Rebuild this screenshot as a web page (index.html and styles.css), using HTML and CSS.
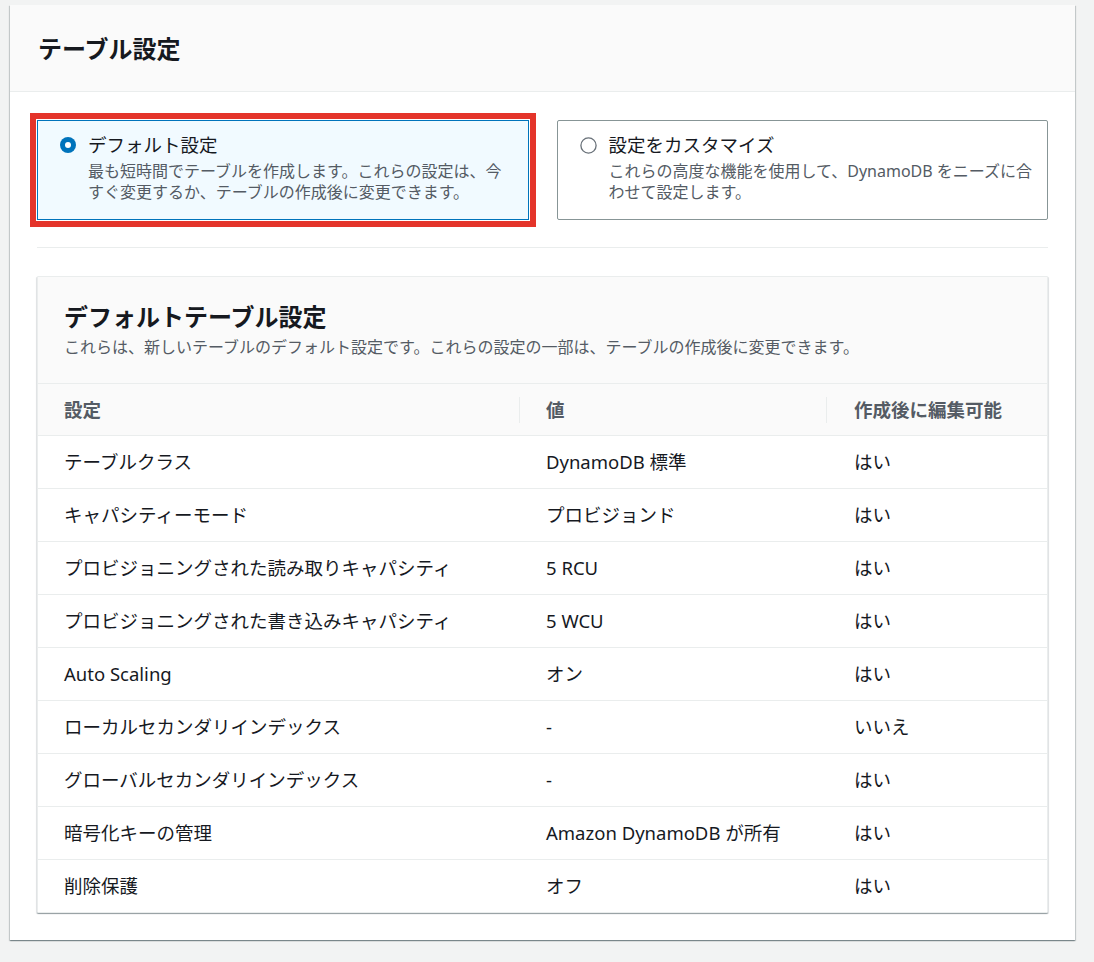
FILE: index.html
```html
<!DOCTYPE html>
<html lang="ja">
<head>
<meta charset="utf-8">
<title>テーブル設定</title>
<link rel="stylesheet" href="styles.css">
</head>
<body>
<div class="page">
  <section class="container">
    <header class="container-header">
      <h2 class="container-title">テーブル設定</h2>
    </header>
    <div class="container-body">
      <div class="tiles">
        <label class="tile tile-selected">
          <span class="radio">
            <svg width="16" height="16" viewBox="0 0 16 16"><circle cx="8" cy="8" r="8" fill="#0073bb"/><circle cx="8" cy="8" r="3" fill="#ffffff"/></svg>
          </span>
          <span class="tile-text">
            <span class="tile-label">デフォルト設定</span>
            <span class="tile-desc">最も短時間でテーブルを作成します。これらの設定は、今<br>すぐ変更するか、テーブルの作成後に変更できます。</span>
          </span>
        </label>
        <label class="tile">
          <span class="radio">
            <svg width="17" height="17" viewBox="0 0 17 17"><circle cx="8.5" cy="8.5" r="7.6" fill="#ffffff" stroke="#687078" stroke-width="1.3"/></svg>
          </span>
          <span class="tile-text">
            <span class="tile-label">設定をカスタマイズ</span>
            <span class="tile-desc">これらの高度な機能を使用して、DynamoDB をニーズに合<br>わせて設定します。</span>
          </span>
        </label>
      </div>
      <hr class="divider">
      <section class="card">
        <header class="card-header">
          <h3 class="card-title">デフォルトテーブル設定</h3>
          <p class="card-desc">これらは、新しいテーブルのデフォルト設定です。これらの設定の一部は、テーブルの作成後に変更できます。</p>
        </header>
        <table class="settings">
          <thead>
            <tr><th class="c1">設定</th><th class="c2">値</th><th class="c3">作成後に編集可能</th></tr>
          </thead>
          <tbody>
            <tr><td class="c1">テーブルクラス</td><td class="c2">DynamoDB 標準</td><td class="c3">はい</td></tr>
            <tr><td class="c1">キャパシティーモード</td><td class="c2">プロビジョンド</td><td class="c3">はい</td></tr>
            <tr><td class="c1">プロビジョニングされた読み取りキャパシティ</td><td class="c2">5 RCU</td><td class="c3">はい</td></tr>
            <tr><td class="c1">プロビジョニングされた書き込みキャパシティ</td><td class="c2">5 WCU</td><td class="c3">はい</td></tr>
            <tr><td class="c1">Auto Scaling</td><td class="c2">オン</td><td class="c3">はい</td></tr>
            <tr><td class="c1">ローカルセカンダリインデックス</td><td class="c2">-</td><td class="c3">いいえ</td></tr>
            <tr><td class="c1">グローバルセカンダリインデックス</td><td class="c2">-</td><td class="c3">はい</td></tr>
            <tr><td class="c1">暗号化キーの管理</td><td class="c2">Amazon DynamoDB が所有</td><td class="c3">はい</td></tr>
            <tr><td class="c1">削除保護</td><td class="c2">オフ</td><td class="c3">はい</td></tr>
          </tbody>
        </table>
      </section>
    </div>
  </section>
</div>
</body>
</html>
```

FILE: styles.css
```css
* { box-sizing: border-box; }

html, body {
  margin: 0;
  padding: 0;
  background: #f2f3f3;
  font-family: "Noto Sans", "Noto Sans CJK JP", sans-serif;
  color: #16191f;
}

.page {
  padding: 5px 19px 20px 10px;
}

.container {
  width: 1065px;
  background: #ffffff;
  box-shadow: 0 1px 1px 0 rgba(0, 28, 36, 0.3), 1px 1px 1px 0 rgba(0, 28, 36, 0.15), -1px 1px 1px 0 rgba(0, 28, 36, 0.15);
}

.container-header {
  background: #fafafa;
  border-bottom: 1px solid #eaeded;
  padding: 28px 28px 28px 28px;
}

.container-title {
  margin: 0;
  font-size: 24px;
  line-height: 30px;
  font-weight: 700;
  font-family: "Noto Sans CJK JP", sans-serif;
}

.container-body {
  padding: 28px 27px 27px 27px;
}

.tiles {
  display: grid;
  grid-template-columns: minmax(0, 1fr) minmax(0, 1fr);
  column-gap: 28px;
}

.tile {
  display: flex;
  align-items: flex-start;
  gap: 12px;
  height: 100px;
  min-width: 0;
  padding: 12px 22px 16px 22px;
  border: 1px solid #879596;
  border-radius: 2px;
  background: #ffffff;
}

.tile-selected {
  background: #f1faff;
  border-color: #0073bb;
  border-radius: 0;
  outline: 6px solid #e4342a;
  outline-offset: 1px;
}

.radio {
  flex: none;
  display: flex;
  align-items: center;
  height: 24px;
}

.radio svg { display: block; }

.tile-text {
  display: flex;
  flex-direction: column;
  min-width: 0;
}

.tile-label {
  font-size: 18.5px;
  line-height: 24px;
  color: #16191f;
}

.tile-desc {
  margin-top: 4px;
  font-size: 16px;
  line-height: 21px;
  color: #545b64;
  white-space: nowrap;
}

.divider {
  margin: 27px 0 28px 0;
  border: 0;
  border-top: 1px solid #eaeded;
  height: 0;
}

.card {
  border: 1px solid #eaeded;
  border-radius: 1px;
  background: #ffffff;
  box-shadow: 0 1px 1px 0 rgba(0, 28, 36, 0.3), 1px 1px 1px 0 rgba(0, 28, 36, 0.1), -1px 1px 1px 0 rgba(0, 28, 36, 0.1);
}

.card-header {
  background: #fafafa;
  border-bottom: 1px solid #eaeded;
  padding: 24px 26px 25px 26px;
}

.card-title {
  margin: 0;
  font-size: 24px;
  line-height: 30px;
  font-weight: 700;
  font-family: "Noto Sans CJK JP", sans-serif;
}

.card-desc {
  margin: 5px 0 0 0;
  font-size: 16px;
  line-height: 22px;
  color: #545b64;
}

.settings {
  width: 100%;
  border-collapse: collapse;
  table-layout: fixed;
}

.settings th,
.settings td {
  text-align: left;
  font-size: 18.5px;
  line-height: 22px;
  padding: 15px 10px 15px 27px;
  border-bottom: 1px solid #eaeded;
  white-space: nowrap;
}

.settings th {
  background-color: #fafafa;
  color: #545b64;
  font-weight: 700;
  padding-top: 15px;
  padding-bottom: 14px;
}

.settings th.c2,
.settings th.c3 {
  background-image: linear-gradient(#eaeded, #eaeded);
  background-repeat: no-repeat;
  background-position: left center;
  background-size: 1px 26px;
}

.settings tbody tr:last-child td {
  border-bottom: 0;
}

.settings .c1 { width: 481px; padding-left: 26px; }
.settings .c2 { width: 307px; padding-left: 27px; }
.settings .c3 { padding-left: 28px; }
```
